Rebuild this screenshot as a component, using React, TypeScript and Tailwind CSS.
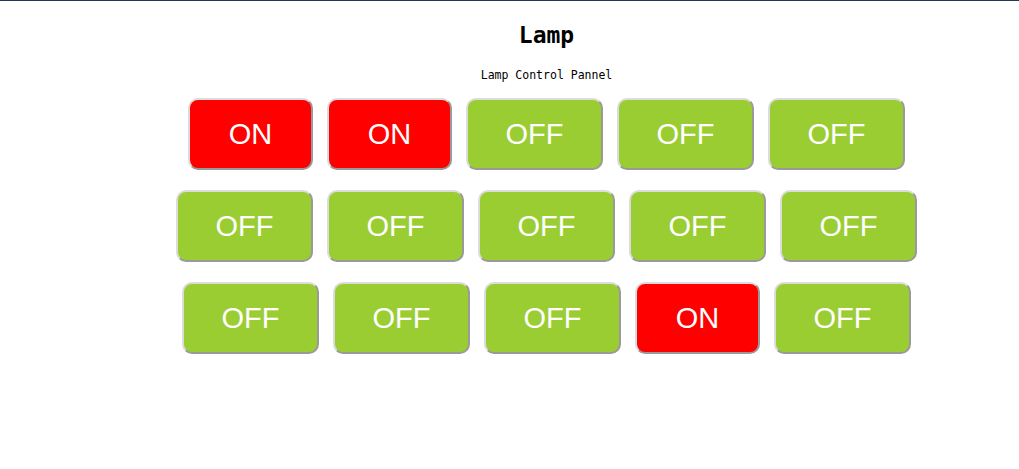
const ROWS: boolean[][] = [
  [true, true, false, false, false],
  [false, false, false, false, false],
  [false, false, false, true, false],
];

function LampButton({ on }: { on: boolean }) {
  return (
    <button
      className={`rounded-[10px] border-2 border-t-[#dcdcdc] border-l-[#dcdcdc] border-b-[#9a9a9a] border-r-[#9a9a9a] py-[18px] text-center text-[29px] leading-[32px] text-white ${
        on ? 'w-[125px] bg-[#ff0000]' : 'w-[137px] bg-[#9acd32]'
      }`}
      style={{ fontFamily: '"Liberation Sans", Arial, sans-serif' }}
    >
      {on ? 'ON' : 'OFF'}
    </button>
  );
}

export default function App() {
  return (
    <div className="min-h-[469px] w-full bg-white border-t border-[#1e3a57]">
      <div className="flex flex-col items-center pl-[74px]" style={{ fontFamily: '"DejaVu Sans Mono", monospace' }}>
        <h1 className="mt-[20px] text-[23px] leading-[28px] font-bold text-black">Lamp</h1>
        <p className="mt-[19px] text-[11.5px] leading-[14px] text-black">Lamp Control Pannel</p>
        <div className="mt-[16px] flex flex-col gap-[20px]">
          {ROWS.map((row, i) => (
            <div key={i} className="flex justify-center gap-[14px]">
              {row.map((on, j) => (
                <LampButton key={j} on={on} />
              ))}
            </div>
          ))}
        </div>
      </div>
    </div>
  );
}
